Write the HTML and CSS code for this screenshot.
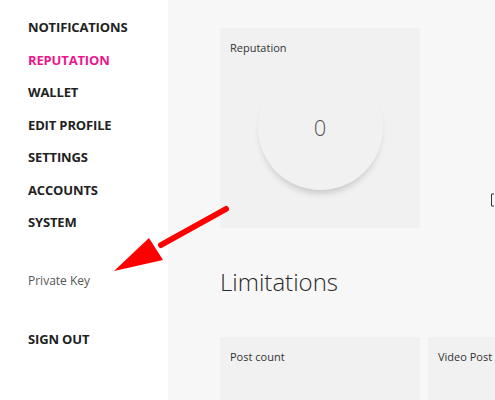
FILE: index.html
```html
<!DOCTYPE html>
<html>
<head>
<meta charset="utf-8">
<link rel="stylesheet" href="styles.css">
</head>
<body>
<div class="app">
  <aside class="sidebar">
    <nav class="nav">
      <a class="nav-item">NOTIFICATIONS</a>
      <a class="nav-item active">REPUTATION</a>
      <a class="nav-item">WALLET</a>
      <a class="nav-item">EDIT PROFILE</a>
      <a class="nav-item">SETTINGS</a>
      <a class="nav-item">ACCOUNTS</a>
      <a class="nav-item">SYSTEM</a>
    </nav>
    <a class="private-key">Private Key</a>
    <a class="nav-item signout">SIGN OUT</a>
  </aside>
  <main class="main">
    <section class="card rep-card">
      <div class="card-label">Reputation</div>
      <div class="circle"><span class="circle-value">0</span></div>
    </section>
    <h2 class="section-title">Limitations</h2>
    <div class="card-row">
      <section class="card small-card"><div class="card-label">Post count</div></section>
      <section class="card small-card"><div class="card-label">Video Post count</div></section>
    </div>
  </main>
</div>
<svg class="arrow" width="130" height="80" viewBox="0 0 130 80">
  <line x1="115" y1="6" x2="50" y2="42" stroke="#ff0000" stroke-width="6" stroke-linecap="round"/>
  <polygon points="3,68 38,35 52,57" fill="#ff0000"/>
</svg>
<svg class="cursor" width="6" height="14" viewBox="0 0 6 14">
  <path d="M4 1 H1.5 V13 H4" fill="none" stroke="#333" stroke-width="1"/>
</svg>
</body>
</html>
```
FILE: styles.css
```css
html, body {
  margin: 0;
  padding: 0;
  width: 495px;
  height: 400px;
  overflow: hidden;
  font-family: "Open Sans", "Noto Sans", sans-serif;
}
.app {
  display: flex;
  height: 400px;
  overflow: hidden;
}
.sidebar {
  width: 168px;
  flex: none;
  background: #fff;
  padding: 11px 0 0 28px;
  box-sizing: border-box;
  display: flex;
  flex-direction: column;
}
.nav {
  display: flex;
  flex-direction: column;
}
.nav-item {
  font-size: 13px;
  font-weight: 700;
  color: #222;
  line-height: 32.5px;
  height: 32.5px;
  letter-spacing: -0.15px;
}
.nav-item.active {
  color: #ec178c;
}
.private-key {
  margin-top: 26px;
  font-size: 12px;
  color: #555;
  line-height: 32px;
}
.signout {
  margin-top: 26px;
}
.main {
  flex: 1;
  background: #f7f7f7;
  padding: 28px 0 0 52px;
  min-width: 0;
  overflow: hidden;
}
.card {
  background: #f1f1f1;
  box-sizing: border-box;
  width: 200px;
}
.rep-card {
  height: 200px;
  padding-top: 12px;
}
.card-label {
  font-size: 11px;
  color: #333;
  padding-left: 10px;
  line-height: 15px;
  white-space: nowrap;
}
.circle {
  width: 125px;
  height: 125px;
  border-radius: 50%;
  background: #f1f1f1;
  box-shadow: 0 6px 7px -3px rgba(0,0,0,0.18);
  margin: 10px auto 0;
  display: flex;
  justify-content: center;
  align-items: center;
  padding-bottom: 2px;
  box-sizing: border-box;
}
.circle-value {
  font-size: 22px;
  font-weight: 300;
  color: #555;
  line-height: 26px;
}
.section-title {
  margin: 38px 0 0 0;
  font-size: 24px;
  font-weight: 300;
  color: #2a2a2a;
  line-height: 32px;
  height: 32px;
}
.card-row {
  display: flex;
  gap: 8px;
  margin-top: 39px;
}
.small-card {
  height: 120px;
  flex: none;
  padding-top: 12px;
}
.arrow {
  position: absolute;
  left: 111px;
  top: 203px;
}
.cursor {
  position: absolute;
  left: 490px;
  top: 193px;
}
```
